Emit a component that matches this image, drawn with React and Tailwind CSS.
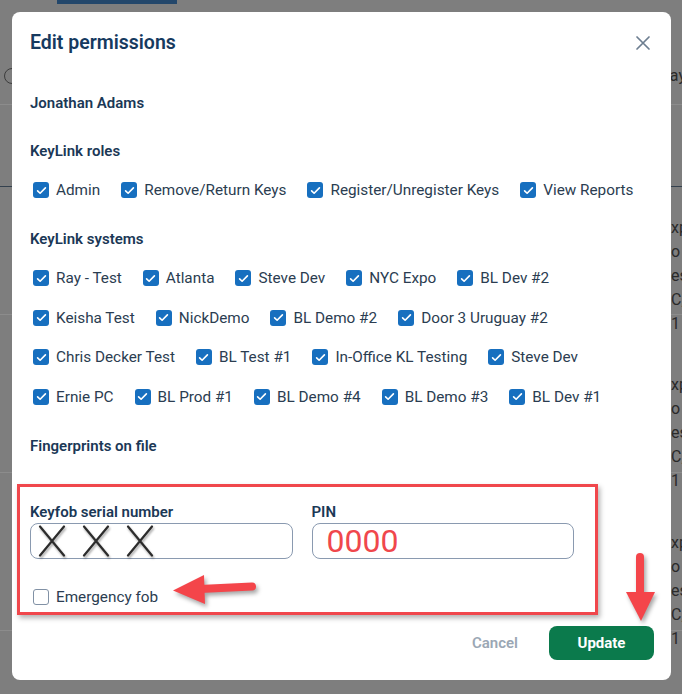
import React from "react";

const roles = ["Admin", "Remove/Return Keys", "Register/Unregister Keys", "View Reports"];

const systemRows = [
  ["Ray - Test", "Atlanta", "Steve Dev", "NYC Expo", "BL Dev #2"],
  ["Keisha Test", "NickDemo", "BL Demo #2", "Door 3 Uruguay #2"],
  ["Chris Decker Test", "BL Test #1", "In-Office KL Testing", "Steve Dev"],
  ["Ernie PC", "BL Prod #1", "BL Demo #4", "BL Demo #3", "BL Dev #1"],
];

const sideText = ["xp", "o", "es", "C,", "1"];

const Box = ({ checked }) =>
  checked ? (
    <span className="w-4 h-4 shrink-0 rounded-[3px] bg-[#176fbf] flex items-center justify-center">
      <svg viewBox="0 0 16 16" className="w-[13px] h-[13px]">
        <path d="M3.2 8.4l3.1 3 6.5-6.6" stroke="white" strokeWidth="2" fill="none" strokeLinecap="round" strokeLinejoin="round" />
      </svg>
    </span>
  ) : (
    <span className="w-4 h-4 shrink-0 rounded-[3px] border-[1.5px] border-[#8191a5] bg-white" />
  );

const Item = ({ label, checked = true }) => (
  <label className="flex items-center gap-[7px] h-5 text-[15.3px] leading-5 text-[#2b3d51] whitespace-nowrap">
    <Box checked={checked} />
    <span>{label}</span>
  </label>
);

const SideGroup = () => (
  <div className="flex flex-col">
    {sideText.map((t, i) => (
      <span key={i} className="h-6 leading-6 text-[16px] text-[#2a2a2a] whitespace-nowrap">{t}</span>
    ))}
  </div>
);

const App = () => {
  return (
    <div className="relative w-[682px] h-[694px] overflow-hidden bg-[#7e7e7e] font-['Roboto','Liberation_Sans',sans-serif]">
      {/* page behind the overlay */}
      <div className="flex flex-col">
        <div className="h-[4px] flex">
          <div className="ml-[57px] w-[120px] bg-[#23476b]" />
        </div>
        <div className="h-[101px] border-b border-[#8c8c8c] flex items-center justify-between pt-[44px]">
          <div className="ml-[4px] w-[16px] h-[16px] rounded-full border-[1.5px] border-[#3c3c3c]" />
          <span className="text-[16px] text-[#2a2a2a] -mr-[4px]">ay</span>
        </div>
        <div className="h-[82px] border-b border-[#34414e]" />
        <div className="h-[128px] border-b border-[#8c8c8c] flex justify-end pt-[29px]">
          <div className="w-[11px]"><SideGroup /></div>
        </div>
        <div className="h-[158px] border-b border-[#8c8c8c] flex justify-end pt-[58px]">
          <div className="w-[11px]"><SideGroup /></div>
        </div>
        <div className="h-[158px] border-b border-[#8c8c8c] flex justify-end pt-[58px]">
          <div className="w-[11px]"><SideGroup /></div>
        </div>
      </div>

      {/* modal */}
      <div className="absolute left-[12px] top-[12px] w-[659px] h-[668px] bg-white rounded-[8px] pl-[18px] pr-[17px] flex flex-col">
        <div className="pt-[17px] flex items-center justify-between">
          <h2 className="text-[19.5px] leading-[28px] font-semibold text-[#163a5f]">Edit permissions</h2>
          <svg viewBox="0 0 16 16" className="w-4 h-4 mr-[3px]">
            <path d="M2 2l12 12M14 2L2 14" stroke="#6d7e90" strokeWidth="1.7" strokeLinecap="round" />
          </svg>
        </div>

        <div className="mt-[36px] text-[15px] leading-5 font-semibold text-[#1b3856]">Jonathan Adams</div>

        <div className="mt-[28px] text-[15px] leading-5 font-semibold text-[#1b3856]">KeyLink roles</div>
        <div className="mt-[19px] pl-[3px] flex gap-[21px]">
          {roles.map((r) => (
            <Item key={r} label={r} />
          ))}
        </div>

        <div className="mt-[29px] text-[15px] leading-5 font-semibold text-[#1b3856]">KeyLink systems</div>
        <div className="mt-[19px] pl-[3px] flex flex-col gap-[19.5px]">
          {systemRows.map((row, i) => (
            <div key={i} className="flex gap-[21px]">
              {row.map((s, j) => (
                <Item key={j} label={s} />
              ))}
            </div>
          ))}
        </div>

        <div className="mt-[29.5px] text-[15px] leading-5 font-semibold text-[#1b3856]">Fingerprints on file</div>

        <div className="mt-[46px] w-[544px] grid grid-cols-2 gap-x-[19px]">
          <div className="flex flex-col">
            <span className="text-[15px] leading-5 font-semibold text-[#1b3856]">Keyfob serial number</span>
            <div className="mt-[1px] h-[36px] rounded-[8px] border border-[#8a9ab0] pl-[7px] flex items-center gap-[16px]">
              {[0, 1, 2].map((k) => (
                <svg key={k} viewBox="0 0 28 32" className="w-[28px] h-[32px] drop-shadow-[1px_2px_1px_rgba(0,0,0,0.35)]">
                  <path d="M2 1.5L26 30.5M26 1.5L2 30.5" stroke="#2c2c2c" strokeWidth="2.2" strokeLinecap="round" />
                </svg>
              ))}
            </div>
          </div>
          <div className="flex flex-col">
            <span className="text-[15px] leading-5 font-semibold text-[#1b3856]">PIN</span>
            <div className="mt-[1px] h-[36px] rounded-[8px] border border-[#8a9ab0] pl-[14px] flex items-center">
              <span className="text-[32px] leading-none text-[#f0474c]">0000</span>
            </div>
          </div>
        </div>

        <div className="mt-[28px] pl-[3px]">
          <Item label="Emergency fob" checked={false} />
        </div>

        <div className="mt-[19px] flex justify-end items-center gap-[31px]">
          <span className="text-[15px] font-semibold text-[#9ba7b4]">Cancel</span>
          <button className="w-[105px] h-[34px] rounded-[8px] bg-[#0b7a4c] text-white text-[15px] font-bold">Update</button>
        </div>

        {/* red annotation box */}
        <div className="absolute left-[5px] top-[472px] w-[581px] h-[131px] border-[3px] border-[#f0474c] shadow-[2px_3px_5px_rgba(0,0,0,0.3)] pointer-events-none" />
      </div>

      {/* annotation arrows */}
      <svg className="absolute left-[165px] top-[568px] w-[100px] h-[44px] drop-shadow-[2px_3px_2px_rgba(0,0,0,0.35)]" viewBox="165 568 100 44">
        <path d="M252 586.5L200 589" stroke="#f4454a" strokeWidth="8" strokeLinecap="round" />
        <path d="M173 590.5L204 575L205 604Z" fill="#f4454a" />
      </svg>
      <svg className="absolute left-[618px] top-[548px] w-[44px] h-[80px] drop-shadow-[2px_3px_2px_rgba(0,0,0,0.35)]" viewBox="618 548 44 80">
        <path d="M640 557L640 595" stroke="#f4454a" strokeWidth="8" strokeLinecap="round" />
        <path d="M626 592L655 592L641 621Z" fill="#f4454a" />
      </svg>
    </div>
  );
};

export default App;
